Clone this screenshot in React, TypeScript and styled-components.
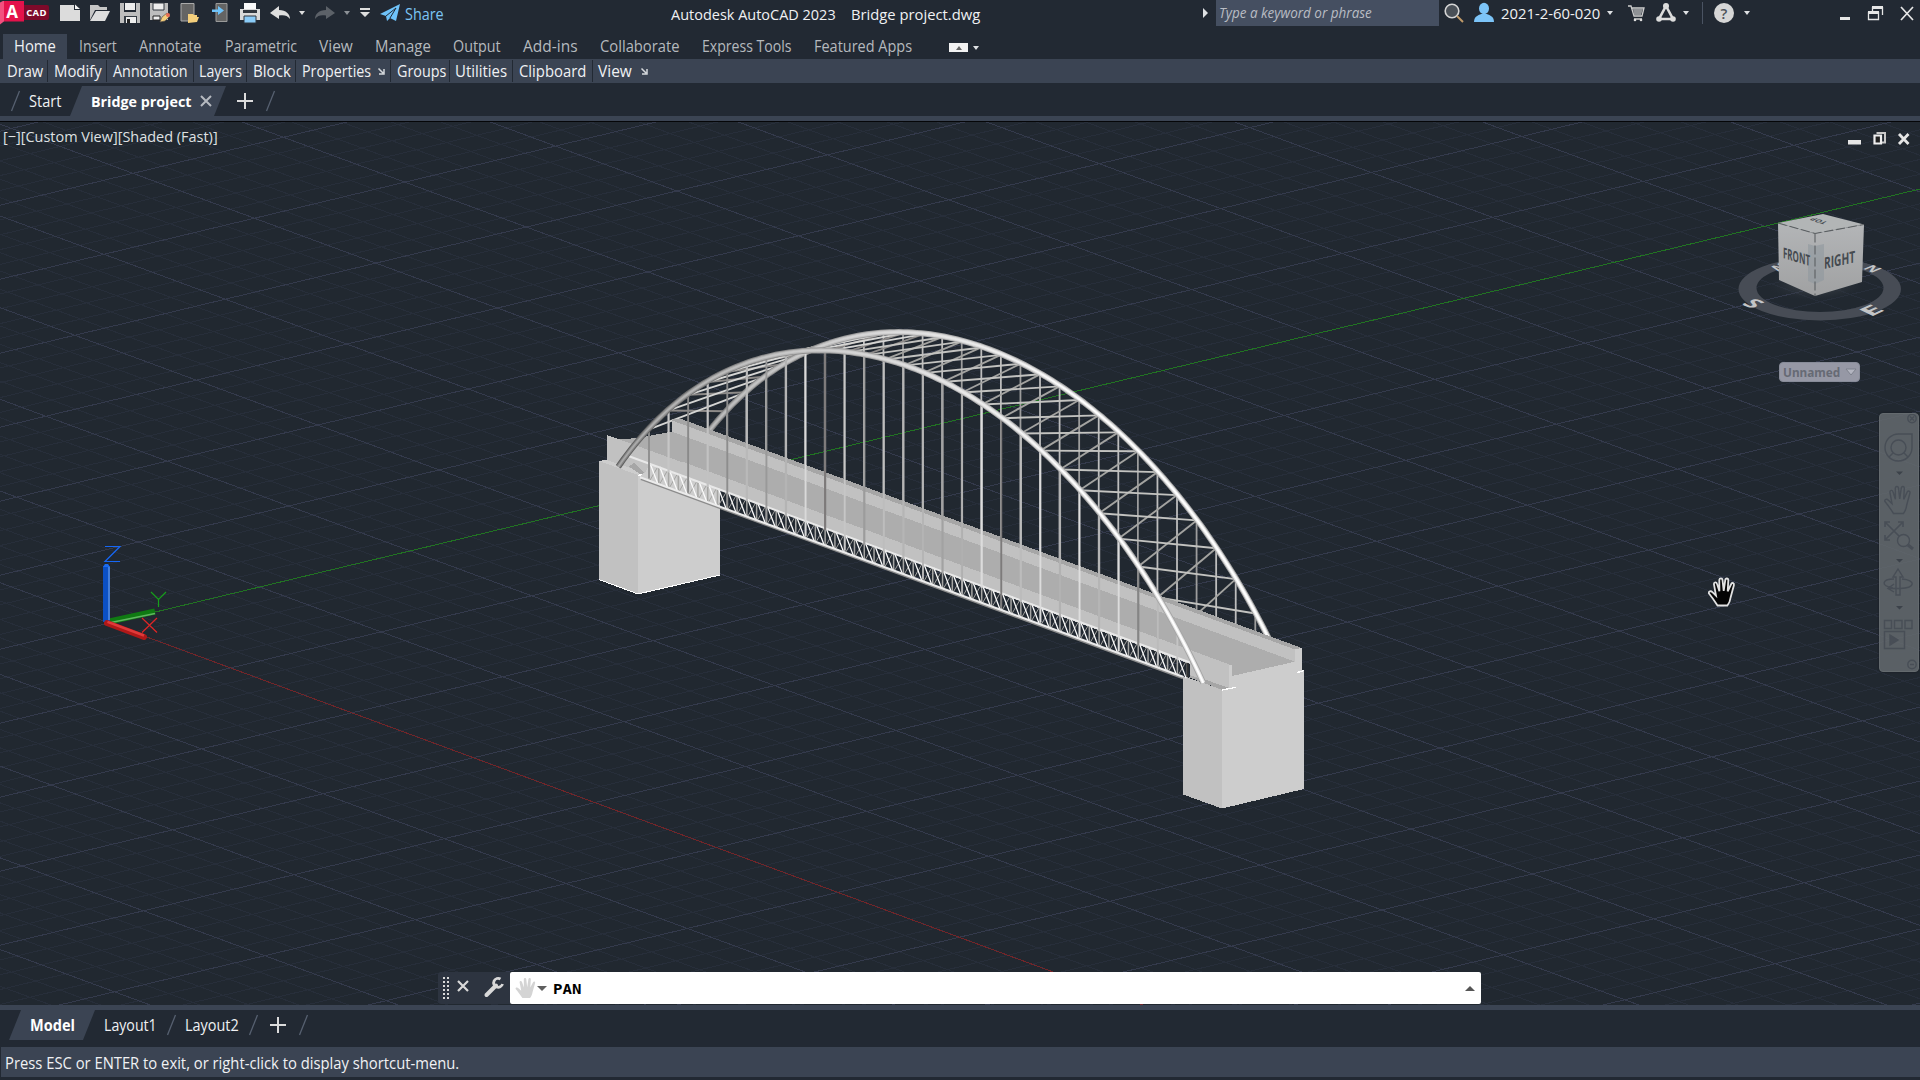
import React, { useLayoutEffect, useRef, useState } from "react";
import styled, { createGlobalStyle } from "styled-components";

const Global = createGlobalStyle`
  * { box-sizing: border-box; }
  html, body { margin: 0; padding: 0; background: #222933; overflow: hidden; }
  body { font-family: "Open Sans", "Noto Sans", sans-serif; }
`;

/* ---------- text fitted to a fixed advance width ---------- */
const FitBox = styled.span<{ $w: number; $size: number; $color: string; $bold?: boolean; $italic?: boolean; $ml: number; $family?: string }>`
  display: block;
  flex: none;
  width: ${(p) => p.$w}px;
  margin-left: ${(p) => p.$ml}px;
  color: ${(p) => p.$color};
  font-size: ${(p) => p.$size}px;
  font-weight: ${(p) => (p.$bold ? 700 : 400)};
  font-style: ${(p) => (p.$italic ? "italic" : "normal")};
  font-family: ${(p) => p.$family || "inherit"};
  white-space: pre;
  line-height: 20px;
`;
const FitInner = styled.span`
  display: inline-block;
  transform-origin: 0 50%;
`;

type FitProps = { text: string; w: number; ml?: number; size?: number; color?: string; bold?: boolean; italic?: boolean; family?: string };
function Fit({ text, w, ml = 0, size = 15.5, color = "#f0f1f3", bold, italic, family }: FitProps) {
  const ref = useRef<HTMLSpanElement>(null);
  const [scale, setScale] = useState(1);
  useLayoutEffect(() => {
    const natural = ref.current ? ref.current.offsetWidth : 0;
    if (natural) setScale((w + 2) / natural);
  }, [w, text]);
  return (
    <FitBox $w={w} $ml={ml} $size={size} $color={color} $bold={bold} $italic={italic} $family={family}>
      <FitInner ref={ref} style={{ transform: `translateX(-1px) scaleX(${scale})` }}>{text}</FitInner>
    </FitBox>
  );
}

/* ---------- frame ---------- */
const Screen = styled.div`
  width: 1920px;
  height: 1080px;
  display: flex;
  flex-direction: column;
  overflow: hidden;
  background: #222933;
`;
const Row = styled.div<{ $h: number; $bg?: string }>`
  display: flex;
  flex: none;
  height: ${(p) => p.$h}px;
  background: ${(p) => p.$bg || "transparent"};
`;
const TitleBar = styled(Row)`
  align-items: flex-start;
  padding-top: 0;
`;
const Slot = styled.div<{ $w: number; $ml?: number; $mt?: number }>`
  flex: none;
  width: ${(p) => p.$w}px;
  margin-left: ${(p) => p.$ml || 0}px;
  margin-top: ${(p) => p.$mt || 0}px;
`;
const Glyph = styled.svg<{ $ml?: number; $mt?: number }>`
  display: block;
  flex: none;
  overflow: visible;
  margin-left: ${(p) => p.$ml || 0}px;
  margin-top: ${(p) => p.$mt || 0}px;
`;
const AppBadge = styled.div`
  display: flex;
  align-items: center;
  flex: none;
  width: 49px;
  height: 25px;
`;
const RedTile = styled.div`
  width: 24px;
  height: 24px;
  line-height: 21px;
  text-align: center;
  color: #fff;
  font-weight: 700;
  font-size: 17px;
  background: linear-gradient(90deg, #f2507f 0 4px, #e4124b 4px);
  clip-path: polygon(0 8%, 16% 0, 100% 0, 100% 88%, 16% 88%, 0 100%);
`;
const CadTile = styled.div`
  width: 25px;
  height: 15px;
  border-radius: 0 2px 2px 0;
  background: #7d0a2a;
  color: #fff;
  font-weight: 700;
  font-size: 9.5px;
  line-height: 15px;
  text-align: center;
  letter-spacing: 0.3px;
`;
const SearchBox = styled.div`
  display: flex;
  flex: none;
  width: 223px;
  height: 26px;
  margin-left: 8px;
  padding: 3px 0 0 3px;
  background: #454f61;
`;
const Divider = styled.div<{ $ml: number; $h: number; $mt: number; $c: string }>`
  flex: none;
  width: 1px;
  height: ${(p) => p.$h}px;
  margin: ${(p) => p.$mt}px 0 0 ${(p) => p.$ml}px;
  background: ${(p) => p.$c};
`;

const RibbonTabs = styled(Row)`
  align-items: stretch;
  padding-left: 3px;
`;
const HomeTab = styled.div`
  width: 64px;
  padding: 2px 0 0 12px;
  background: #3b4453;
`;
const TabText = styled.div`
  padding-top: 2px;
`;
const CollapseButton = styled.div`
  display: flex;
  align-items: center;
  justify-content: center;
  width: 19px;
  height: 9px;
  margin: 9px 0 0 38px;
  background: #f2f2f2;
`;
const PanelCell = styled.div<{ $w: number; $last?: boolean }>`
  display: flex;
  align-items: center;
  flex: none;
  width: ${(p) => p.$w}px;
  height: 22px;
  margin-top: 1px;
  border-right: ${(p) => (p.$last ? "none" : "1px solid #222933")};
`;
const ActiveFileTab = styled.div`
  display: flex;
  flex: none;
  width: 156px;
  height: 30px;
  margin: 3px 0 0 9px;
  padding-top: 5px;
  background: #3b4453;
  clip-path: polygon(12px 0, 156px 0, 144px 100%, 0 100%);
`;
const ModelTab = styled.div`
  flex: none;
  width: 86px;
  height: 30px;
  margin-left: 9px;
  padding-top: 5px;
  background: #3b4453;
  clip-path: polygon(12px 0, 100% 0, 74px 100%, 0 100%);
`;
const Viewport = styled.div`
  position: relative;
  flex: none;
  height: 883px;
  background: #212830;
  overflow: hidden;
`;
const Canvas = styled.svg`
  display: block;
`;
const ViewLabel = styled.div`
  position: absolute;
  left: 4px;
  top: 4px;
`;
const UnnamedTag = styled.div`
  position: absolute;
  left: 1779px;
  top: 240px;
  display: flex;
  width: 81px;
  height: 20px;
  border: 1px solid #888c99;
  border-radius: 4px;
  background: #9698a5;
`;
const NavBar = styled.div`
  position: absolute;
  left: 1879px;
  top: 291px;
  width: 40px;
  height: 259px;
  border: 1px solid #646a6e;
  border-radius: 4px;
  background: rgba(98, 104, 108, 0.88);
  box-shadow: 0 0 2px #14191f;
`;
const CommandLine = styled.div`
  position: absolute;
  left: 438px;
  top: 850px;
  display: flex;
  width: 1043px;
  height: 32px;
`;
const CommandGrip = styled.div`
  display: flex;
  flex: none;
  width: 72px;
  background: #2d3440;
  border-radius: 3px 0 0 3px;
`;
const CommandInput = styled.div`
  display: flex;
  flex: 1;
  min-width: 0;
  background: #fff;
  border-radius: 2px;
`;
const StatusBar = styled(Row)`
  margin: 7px 0 0 1px;
  padding: 6px 0 0 5px;
`;

/* ---------- small icons ---------- */
const Caret = ({ ml, mt = 11, c = "#dfe1e4", w = 6 }: { ml: number; mt?: number; c?: string; w?: number }) => (
  <Glyph $ml={ml} $mt={mt} width={w} height={4}><path d={`M0 0H${w}L${w / 2} 4Z`} fill={c} /></Glyph>
);
const Slash = ({ ml, mt = 0, h = 20 }: { ml: number; mt?: number; h?: number }) => (
  <Glyph $ml={ml} $mt={mt} width={9} height={h}><path d={`M8.5 0L0.5 ${h}`} stroke="#566070" strokeWidth="1.3" /></Glyph>
);
const Plus = ({ ml, mt }: { ml: number; mt: number }) => (
  <Glyph $ml={ml} $mt={mt} width={16} height={16}><path d="M8 0V16M0 8H16" stroke="#dcdcdc" strokeWidth="2" /></Glyph>
);
const Launcher = ({ ml }: { ml: number }) => (
  <Glyph $ml={ml} width={7} height={7}><path d="M0.5 0.5L5 5M6 1V6H1" fill="none" stroke="#d6d9dd" strokeWidth="1.5" /></Glyph>
);
const HAND = "M9.5 28.5C6 23 3.5 19.5 .8 16.2C.4 14.2 2.9 13.6 4.4 15.2L8 18.6L5.9 7C6 4.9 8.4 4.8 9 6.8L11.4 14.2L11.3 3C11.6 .9 14.2 .9 14.5 3L15.7 13.9L17.3 2.8C17.9 .8 20.3 1.2 20.3 3.2L19.7 14.4L23.2 7C24.3 5.2 26.4 6.2 25.9 8.2L22.6 20.5C22.2 23.5 21.4 26 19.4 28.5Z";

function QuickAccess() {
  return (
    <Glyph $ml={11} $mt={0} width={340} height={26} viewBox="60 0 340 26">
      <path d="M60 5H74V10H80V21H60Z" fill="#dcdcdc" /><path d="M75 4.500L80 9H75Z" fill="#f5f5f5" />
      <path d="M90 20V5H98L100 7H107V10H95Z" fill="#c6c6c6" /><path d="M96 11H110L105 21H90Z" fill="#dedede" />
      <path d="M120 3H140V23H120Z" fill="#bdbdbd" /><path d="M124 3H136V12H124Z" fill="#222933" /><path d="M125 3H135V10H125Z" fill="#ededed" /><path d="M124 16H137V23H124Z" fill="#333a42" /><path d="M126 17H136V23H126Z" fill="#eee" /><path d="M127 19H130V23H127Z" fill="#222" />
      <path d="M150 3H168V20H150Z" fill="#bdbdbd" /><path d="M153 3H164V10H153Z" fill="#ededed" stroke="#30363e" /><path d="M153 16H160V20H153Z" fill="#eee" stroke="#222" />
      <path d="M160 22L162 17L167 13L170 16L165 21Z" fill="#f4cf7c" stroke="#5b5148" strokeWidth=".7" /><circle cx="168" cy="15" r="2" fill="#e66a52" />
      <path d="M181 3.500H194V21H181Z" fill="#646464" stroke="#aaa" /><path d="M188 23V14H193L194 15H197V17H199L197 22Z" fill="#f4cf7c" />
      <path d="M216 3.500H227V21.500H216Z" fill="#646464" stroke="#9a9a9a" /><path d="M212 9.500H218V6L224 10.500L218 15V12H212Z" fill="#6fc3fa" />
      <path d="M244 3H256V9H244Z" fill="#fafafa" /><path d="M240 9H260V20H240Z" fill="#d9d9d9" /><path d="M243 10H257V13H243Z" fill="#30363e" /><path d="M244 16H256V23H244Z" fill="#8acbf8" stroke="#30363e" />
      <path d="M270 13L279 6V10C286 10 290 14 290 19C287 15 284 15 279 15.500V19Z" fill="#dedede" />
      <path d="M299 11H305L302 15Z" fill="#dedede" />
      <path d="M335 13L326 6V10C319 10 315 14 315 19C318 15 321 15 326 15.500V19Z" fill="#5c6168" />
      <path d="M344 11H350L347 15Z" fill="#8c9196" />
      <path d="M360 8H370V10H360ZM360 12H370L365 17Z" fill="#dedede" />
      <path d="M380 14L400 4L396 21L390 18L387 21L386 16Z" fill="#6fc3fa" /><path d="M386 16L396 8L390 18" fill="none" stroke="#222933" strokeWidth="1" />
    </Glyph>
  );
}

/* ---------- drawing: grid ---------- */
const RED_SLOPE = 0.3696;
const GREEN_SLOPE = -0.2397;
function Grid() {
  const minor: string[] = [];
  const major: string[] = [];
  for (let k = -75; k < 50; k++) {
    const y = 582.7 + k * 18.34;
    (k % 5 === 0 ? major : minor).push(`M0 ${y.toFixed(1)}L1920 ${(y + 1920 * RED_SLOPE).toFixed(1)}`);
  }
  for (let k = -40; k < 65; k++) {
    const y = 649.2 + k * 14.8;
    (k % 5 === 0 ? major : minor).push(`M0 ${y.toFixed(1)}L1920 ${(y + 1920 * GREEN_SLOPE).toFixed(1)}`);
  }
  return (
    <g fill="none" shapeRendering="crispEdges">
      <path d={minor.join("")} stroke="#272e3a" />
      <path d={major.join("")} stroke="#343a4c" />
      <path d="M107 622.300L1143 1005.200" stroke="#722529" />
      <path d="M107 623.600L1920 189" stroke="#217322" />
    </g>
  );
}

/* ---------- drawing: bridge ---------- */
const X0 = 618.3, X1 = 1203.3, Y0 = 466.7;
const archY = (x: number) => {
  const u = Math.min(1, Math.abs((x - 910.8) / 292.5));
  const h = (Math.sqrt(1.687 - u * u) - 0.8288) / 0.47;
  return Y0 + (x - X0) * RED_SLOPE - 207.5 * h;
};
const BAY = 19.57, DX = 77.9, DY = -18.2;
const nodeX = (i: number) => 649 + BAY * i;
const HANGER = ["#8f8f8f", "#c6c6c6", "#8a8a8a", "#c2c2c2", "#8d8d8d", "#b9b9b9", "#999", "#b4b4b4", "#d9d9d9", "#7d7a7a", "#c6c6c6", "#9c9c9c", "#bdbdbd", "#b5b5b5", "#b4b4b4", "#a2a2a2", "#b0b0b0", "#dcdcdc", "#7d7b7b", "#bcbcbc", "#dcdcdc", "#b2b2b2", "#dedede", "#b5b5b5", "#dcdcdc", "#858585", "#bbb", "#c4c4c4"];

function archPath(dx: number, dy: number) {
  let d = "";
  for (let x = X0; x <= X1 + 0.1; x += 4.5) d += `${d ? "L" : "M"}${(x + dx).toFixed(1)} ${(archY(x) + dy).toFixed(1)}`;
  return d;
}
function Tube({ dx, dy }: { dx: number; dy: number }) {
  const d = archPath(dx, dy);
  return (
    <g fill="none">
      <path d={d} stroke="url(#tubeEdge)" strokeWidth="6" />
      <path d={d} stroke="url(#tubeBody)" strokeWidth="4" />
      <path d={d} stroke="url(#tubeCore)" strokeWidth="1.800" />
    </g>
  );
}
function Bridge() {
  const hangers = Array.from({ length: 28 }, (_, i) => i);
  const chord = (x: number) => 455 + (x - 626.7) * 0.3682;
  const verts: string[] = [];
  const xs: string[] = [];
  const xs2: string[] = [];
  for (let j = 0; j < 56; j++) {
    const a = 649 + j * BAY / 2, b = a + BAY / 2;
    if (a > 1188) break;
    verts.push(`M${a} ${chord(a)}V${chord(a) + 17}`);
    if (b < 1190) {
      xs.push(`M${a + 1} ${chord(a)}L${b - 1} ${chord(b) + 17}`);
      xs2.push(`M${a + 1} ${chord(a) + 17}L${b - 1} ${chord(b)}`);
    }
  }
  return (
    <g>
      <defs>
        <linearGradient id="tubeEdge" gradientUnits="userSpaceOnUse" x1="618" x2="1281" y1="0" y2="0"><stop offset="0" stopColor="#5c5c5c" /><stop offset=".2" stopColor="#858585" /><stop offset=".5" stopColor="#b0b0b0" /><stop offset="1" stopColor="#a0a0a0" /></linearGradient>
        <linearGradient id="tubeBody" gradientUnits="userSpaceOnUse" x1="618" x2="1281" y1="0" y2="0"><stop offset="0" stopColor="#848484" /><stop offset=".2" stopColor="#b0b0b0" /><stop offset=".5" stopColor="#dadada" /><stop offset="1" stopColor="#e9e9e9" /></linearGradient>
        <linearGradient id="tubeCore" gradientUnits="userSpaceOnUse" x1="618" x2="1281" y1="0" y2="0"><stop offset="0" stopColor="#a6a6a6" /><stop offset=".2" stopColor="#c2c2c2" /><stop offset=".5" stopColor="#e6e6e6" /><stop offset=".7" stopColor="#fff" /></linearGradient>
      </defs>
      {/* far arch and its hangers */}
      <g strokeWidth="1.800">
        {hangers.map((i) => {
          const x = nodeX(i) + DX;
          return <path key={i} d={`M${x} ${archY(nodeX(i)) + DY}V${419 + (x - 680) * RED_SLOPE + 4}`} stroke={i % 3 === 0 ? "#9d9d9d" : "#bdbdbd"} />;
        })}
      </g>
      <g strokeWidth="1.900">
        {hangers.slice(1).map((i) => (
          <path key={i} d={`M${nodeX(i)} ${archY(nodeX(i)) + 1}L${nodeX(i - 1) + DX} ${archY(nodeX(i - 1)) + DY + 1}`} stroke={i < 12 ? "#8d8a88" : "#a3a3a0"} />
        ))}
        {hangers.slice(0, 27).map((i) => (
          <path key={i} d={`M${nodeX(i)} ${archY(nodeX(i)) + 1}L${nodeX(i + 1) + DX} ${archY(nodeX(i + 1)) + DY + 1}`} stroke={i < 10 ? "#d6d6d4" : "#c3c3c0"} />
        ))}
      </g>
      <Tube dx={DX} dy={DY} />
      <g shapeRendering="crispEdges">
        {/* piers */}
        <path d="M599 461L604 460L650 463L720 489V575L638 594L599 579.500Z" fill="#cdcdcd" />
        <path d="M599 461L638 475V594L599 579.500Z" fill="#c1c1c1" />
        <path d="M599 579.500L638 594L720 575" fill="none" stroke="#fff" />
        <path d="M1183 676L1222 689.500L1304 670.500V789L1222 808.500L1183 794.500Z" fill="#cdcdcd" />
        <path d="M1183 676L1222 689.500V808.500L1183 794.500Z" fill="#c1c1c1" />
        {/* roadway */}
        <path d="M641 437.500L672 431.500V419L680 418.500L1301.700 648L1295 661.700L1232 676L1222 690L1190 677V663L640 460L615 440Z" fill="#adadad" />
        <path d="M672 420.500L1295 649.500V661.700L672 431.700Z" fill="#c1c1c1" />
        <path d="M672 420.500L680 418.500L1301.700 648L1295 649.500Z" fill="#a6a6a6" />
        <path d="M607 435L628 442.500L636 444.500L1229.300 664.500V688.500L1190 675V664L650 464L645 473L607 460Z" fill="#c1c1c1" />
        <path d="M628 442.500L641 438L720 467.500L680 461.500Z" fill="#adadad" />
        <path d="M629 466.500L634 463L645 473L640 474Z" fill="#a6a6a6" />
        <path d="M1188 677L1205 679.500L1229 688L1222 689.800Z" fill="#a6a6a6" />
        <path d="M1229.300 665.500L1232 664.500V676L1295 661.700V649.500L1301.700 648V671L1304 670.500V674L1229 690Z" fill="#cdcdcd" />
        <path d="M1222 690L1236 687.300M1297 672.500L1304 670.700M638 475.500L642 474.500" stroke="#fff" strokeWidth="1.300" />
      </g>
      {/* lattice truss */}
      <path d={verts.join("")} stroke="#a6a6a4" strokeWidth="1.500" />
      <path d={xs2.join("")} stroke="#a3a3a1" strokeWidth="1" />
      <path d={xs.join("")} stroke="#fbfbfb" strokeWidth="1.300" />
      <path d="M1187.500 663V677" stroke="#333" strokeWidth="2" />
      <path d="M627 455.500L1190 662.500" stroke="#e8e8e8" strokeWidth="2" />
      <path d="M641 478.800L1183 678.200" stroke="#8c8c8c" strokeWidth="2.400" />
      <path d="M640 477.300L1183 676.700" stroke="#ebebeb" strokeWidth="2" />
      {/* near hangers */}
      {hangers.map((i) => {
        const x = nodeX(i);
        return <path key={i} d={`M${x} ${archY(x)}V${chord(x) + (i % 2 ? 2 : 15)}`} stroke={HANGER[i]} strokeWidth={i % 2 && i < 26 ? 2.2 : 1.9} />;
      })}
      <Tube dx={0} dy={0} />
    </g>
  );
}

function Ucs() {
  return (
    <g>
      <path d="M107 622L155 611.500" stroke="#0f7a12" strokeWidth="6" /><path d="M111 622.500L155 613.500" stroke="#5fb660" strokeWidth="1.500" />
      <path d="M106.500 566V622" stroke="#0b50c4" strokeWidth="7" /><path d="M109 567V620" stroke="#5a8fe0" strokeWidth="1.500" /><path d="M103 567L105 564H108L110 567Z" fill="#1c6cf0" />
      <path d="M107 623L144 637" stroke="#b01818" strokeWidth="6" strokeLinecap="round" /><path d="M107.500 621.800L144 635.500" stroke="#e03a3a" strokeWidth="2.500" />
      <g fill="none" strokeWidth="1.200">
        <path d="M105 546.500H120L105 561.500H120" stroke="#1667f5" />
        <path d="M151 592L158.500 599.500L166 592M158.500 599.500V607" stroke="#17a01a" />
        <path d="M142 618L157 632.500M157 618L142 632.500" stroke="#e02626" />
      </g>
    </g>
  );
}

function ViewCube() {
  return (
    <g fontFamily="Open Sans, sans-serif" fontWeight="700">
      <defs>
        <radialGradient id="cubeShadow"><stop offset="0" stopColor="#555a60" stopOpacity=".8" /><stop offset="1" stopColor="#212830" stopOpacity="0" /></radialGradient>
        <linearGradient id="cubeL" x1="0" x2="0" y1="0" y2="1"><stop offset="0" stopColor="#b3b5b7" /><stop offset="1" stopColor="#a0a1a2" /></linearGradient>
      </defs>
      <path fillRule="evenodd" fill="#474c55" d="M1738.500 289A81.200 31.500 0 1 1 1901 289A81.200 31.500 0 1 1 1738.500 289ZM1756.500 288A63.500 24 0 1 0 1883.500 288A63.500 24 0 1 0 1756.500 288Z" />
      <ellipse cx="1816" cy="285" rx="52" ry="17" fill="url(#cubeShadow)" />
      <g fill="#c3c5c7" fontSize="18">
        <text transform="matrix(1.15 .5 -1.05 .48 1741 304)">S</text>
        <text transform="matrix(1.5 -.68 1.05 .5 1870.500 317)">E</text>
        <text transform="matrix(-.85 -.35 .85 -.35 1883 269)" fontSize="16">N</text>
        <text transform="matrix(-.85 .35 -.85 -.35 1782 262)" fontSize="16">W</text>
      </g>
      <path d="M1778 223L1823 214L1864 224.500L1815 233.500Z" fill="#b2b5b6" />
      <path d="M1778 223L1815 233.500V296L1779 280Z" fill="url(#cubeL)" />
      <path d="M1815 233.500L1864 224.500L1862 282L1815 296Z" fill="url(#cubeL)" />
      <path d="M1808 244L1815 246L1824 244V280L1815 284L1808 281Z" fill="#8f979f" opacity=".6" />
      <path d="M1778 223L1815 233.500L1864 224.500M1815 233.500V296" fill="none" stroke="#5c6063" strokeWidth="1.100" strokeDasharray="9 3" />
      <g fill="#454a50">
        <text transform="matrix(1 .3 0 1 1783 258)" fontSize="15" textLength="27" lengthAdjust="spacingAndGlyphs">FRONT</text>
        <text transform="matrix(1 -.22 0 1 1824 269)" fontSize="16" textLength="31" lengthAdjust="spacingAndGlyphs">RIGHT</text>
        <text transform="matrix(-.55 -.18 .5 -.25 1828 222)" fontSize="13">TOP</text>
      </g>
    </g>
  );
}

function NavIcons() {
  return (
    <Canvas width={38} height={257} viewBox="1880 414 38 257">
      <g fill="none" stroke="#454b54" strokeWidth="1.400" opacity=".85">
        <circle cx="1912" cy="418.500" r="4.200" /><path d="M1910 416.500L1914 420.500M1914 416.500L1910 420.500" />
        <path d="M1899 434H1912V448A13.500 13.500 0 1 1 1899 434Z" /><circle cx="1898.500" cy="447.500" r="7.500" /><path d="M1893 453L1889 457M1904 453L1908 457" />
        <path d={HAND} transform="translate(1884 485)" />
        <path d="M1885 522L1903 540M1903 522L1885 540M1885 527V522H1890M1898 522H1903V527M1885 535V540H1890" strokeWidth="1.600" /><circle cx="1903.500" cy="540.500" r="6" fill="#5d6368" /><path d="M1908 545L1913 549" strokeWidth="3" />
        <path d="M1896 595V577H1893L1898 569L1903 577H1900V595Z" /><path d="M1893 588C1880 586 1882 579 1894 579M1902 579C1916 580 1916 588 1900 588.500H1889M1894 584L1888 588.500L1894 592" />
        <path d="M1884.500 620.500H1891.500V628.500H1884.500ZM1894.500 620.500H1902V628.500H1894.500ZM1905 620.500H1912V628.500H1905ZM1884.500 631.500H1904.500V648.500H1884.500Z" /><path d="M1890 635L1898 640L1890 645Z" fill="#454b54" />
        <circle cx="1912" cy="664.500" r="4.200" /><path d="M1910 664.500H1914" />
      </g>
      <path d="M1896 471.500H1903L1899.500 475ZM1896 559H1903L1899.500 562.500ZM1896 606H1903L1899.500 609.500Z" fill="#3c424a" />
    </Canvas>
  );
}

const ribbon: [string, number, number][] = [
  ["Insert", 13, 36], ["Annotate", 24, 61], ["Parametric", 25, 70], ["View", 24, 32], ["Manage", 24, 54], ["Output", 24, 46],
  ["Add-ins", 24, 53], ["Collaborate", 24, 78], ["Express Tools", 24, 88], ["Featured Apps", 24, 96],
];
const panels: { t: string; cell: number; ml: number; w: number; launch?: number; last?: boolean }[] = [
  { t: "Draw", cell: 48, ml: 8, w: 34 }, { t: "Modify", cell: 59, ml: 7, w: 46 }, { t: "Annotation", cell: 87, ml: 7, w: 73 },
  { t: "Layers", cell: 53, ml: 6, w: 41 }, { t: "Block", cell: 49, ml: 7, w: 36 }, { t: "Properties", cell: 95, ml: 7, w: 67, launch: 8 },
  { t: "Groups", cell: 59, ml: 7, w: 47 }, { t: "Utilities", cell: 63, ml: 6, w: 50 }, { t: "Clipboard", cell: 80, ml: 7, w: 65 },
  { t: "View", cell: 60, ml: 6, w: 32, launch: 10, last: true },
];

export default function App() {
  return (
    <Screen>
      <Global />
      <TitleBar $h={34}>
        <AppBadge><RedTile>A</RedTile><CadTile>CAD</CadTile></AppBadge>
        <QuickAccess />
        <Slot $w={37} $ml={6} $mt={4}><Fit text="Share" w={37} color="#7cc4f5" /></Slot>
        <Slot $w={163} $ml={229} $mt={4}><Fit text="Autodesk AutoCAD 2023" w={163} size={15} /></Slot>
        <Slot $w={127} $ml={17} $mt={4}><Fit text="Bridge project.dwg" w={127} size={15} /></Slot>
        <Glyph $ml={224} $mt={8} width={5} height={10}><path d="M0 0L5 5L0 10Z" fill="#dfe1e4" /></Glyph>
        <SearchBox><Fit text="Type a keyword or phrase" ml={1} w={151} size={14} italic color="#b9bdc4" /></SearchBox>
        <Glyph $ml={5} $mt={3} width={20} height={20}><circle cx="8" cy="8" r="6.800" fill="#4a5057" stroke="#d5d5d5" strokeWidth="1.600" /><path d="M13 13L19 19" stroke="#c09a6a" strokeWidth="2" /></Glyph>
        <Glyph $ml={10} $mt={3} width={20} height={19}><ellipse cx="10" cy="5.500" rx="5" ry="5.800" fill="#7cc4f8" /><path d="M0 19C0 13 5 12 7 11H13C15 12 20 13 20 19Z" fill="#7cc4f8" /></Glyph>
        <Slot $w={98} $ml={8} $mt={3}><Fit text="2021-2-60-020" w={97} size={15} /></Slot>
        <Caret ml={7} />
        <Glyph $ml={15} $mt={5} width={16} height={17}><path d="M0 1H3L6 11H14L16 3H4M6 14H14" fill="none" stroke="#cfcfcf" strokeWidth="1.300" /><path d="M5 4H15L13 10H6Z" fill="#8f9296" /><circle cx="7" cy="15" r="1.300" fill="#ddd" /><circle cx="13" cy="15" r="1.300" fill="#ddd" /></Glyph>
        <Glyph $ml={12} $mt={3} width={20} height={19}><path d="M10 3L17 16H3Z" fill="none" stroke="#dcdcdc" strokeWidth="2.600" /><circle cx="10" cy="3" r="3" fill="#dcdcdc" /><circle cx="3" cy="16" r="2.800" fill="#dcdcdc" /><circle cx="17" cy="16" r="2.800" fill="#dcdcdc" /></Glyph>
        <Caret ml={7} />
        <Divider $ml={13} $mt={2} $h={22} $c="#4a5362" />
        <Glyph $ml={11} $mt={3} width={20} height={20}><circle cx="10" cy="10" r="10" fill="#d6d6d6" /><text x="10" y="15.500" textAnchor="middle" fontSize="15" fontWeight="600" fill="#4c5259">?</text></Glyph>
        <Caret ml={10} />
        <Glyph $ml={90} $mt={6} width={75} height={16}>
          <path d="M0 11H10V14H0Z" fill="#e6e6e6" />
          <path d="M32.500 1H43M42.500 1V9M32.500 1V5M28.500 6.500H38.500V13.500H28.500Z" fill="none" stroke="#e6e6e6" strokeWidth="1.300" /><path d="M32 0H43V3H32ZM28 5H39V8H28Z" fill="#e6e6e6" />
          <path d="M61 1L73 14M73 1L61 14" stroke="#e6e6e6" strokeWidth="1.700" />
        </Glyph>
      </TitleBar>

      <RibbonTabs $h={25}>
        <HomeTab><Fit text="Home" w={40} /></HomeTab>
        {ribbon.map(([t, ml, w]) => <TabText key={t}><Fit text={t} ml={ml} w={w} color="#b5b9be" /></TabText>)}
        <CollapseButton><Glyph width={6} height={4}><path d="M0 4H6L3 0Z" fill="#666" /></Glyph></CollapseButton>
        <Caret ml={5} mt={12} />
      </RibbonTabs>

      <Row $h={24} $bg="#3b4453">
        {panels.map((p) => (
          <PanelCell key={p.t} $w={p.cell} $last={p.last}>
            <Fit text={p.t} ml={p.ml} w={p.w} />
            {p.launch && <Launcher ml={p.launch} />}
          </PanelCell>
        ))}
      </Row>

      <Row $h={33}>
        <Slash ml={11} mt={8} />
        <Slot $w={31} $ml={10} $mt={8}><Fit text="Start" w={31} /></Slot>
        <ActiveFileTab>
          <Fit text="Bridge project" ml={22} w={98} bold size={15} color="#fff" />
          <Glyph $ml={11} $mt={5} width={10} height={10}><path d="M0 0L10 10M10 0L0 10" stroke="#b6bac0" strokeWidth="2" /></Glyph>
        </ActiveFileTab>
        <Plus ml={11} mt={10} />
        <Slash ml={13} mt={8} />
      </Row>
      <Row $h={5} $bg="#3b4453" />
      <Row $h={1} $bg="#050608" />

      <Viewport>
        <Canvas width={1920} height={883} viewBox="0 122 1920 883">
          <Grid />
          <Bridge />
          <Ucs />
          <ViewCube />
          <g>
            <path d="M1848 140H1861V144.500H1848Z" fill="#e6e6e6" />
            <path d="M1876.500 133H1885V142.500H1882" fill="none" stroke="#c9c9c9" strokeWidth="2" /><path d="M1874.500 135.500H1881V143.500H1874.500Z" fill="#222" stroke="#eee" strokeWidth="2.200" />
            <path d="M1899 134L1908.500 144M1908.500 134L1899 144" stroke="#e6e6e6" strokeWidth="2.800" />
          </g>
          <path d={HAND} transform="translate(1708 577)" fill="#050505" stroke="#e2e2e2" strokeWidth="1.800" />
        </Canvas>
        <ViewLabel><Fit text="[−][Custom View][Shaded (Fast)]" w={213} size={15} color="#dfe1e3" /></ViewLabel>
        <UnnamedTag>
          <Fit text="Unnamed" ml={4} w={55} size={12} color="#666a74" bold family="'Noto Sans', sans-serif" />
          <Glyph $ml={7} $mt={6} width={10} height={6}><path d="M0 0H10L5 6Z" fill="#b3b5c0" stroke="#7d818c" /></Glyph>
        </UnnamedTag>
        <NavBar><NavIcons /></NavBar>
        <CommandLine>
          <CommandGrip>
            <Glyph $ml={5} $mt={5} width={6} height={22}><path d="M1 0V22M5 0V22" stroke="#d9d9d9" strokeWidth="2" strokeDasharray="2 2" /></Glyph>
            <Glyph $ml={9} $mt={9} width={10} height={10}><path d="M0 0L10 10M10 0L0 10" stroke="#d9d9d9" strokeWidth="2.200" /></Glyph>
            <Glyph $ml={17} $mt={5} width={20} height={20}><path d="M1.500 18L11 8.500" stroke="#d9d9d9" strokeWidth="4" strokeLinecap="round" /><path d="M15.500 1.500A4.500 4.500 0 1 0 17.500 6.500" fill="none" stroke="#d9d9d9" strokeWidth="2.800" transform="translate(0 .500)" /></Glyph>
          </CommandGrip>
          <CommandInput>
            <Glyph $ml={5} $mt={5} width={21} height={22} viewBox="0 0 27 30" preserveAspectRatio="none"><path d={HAND} fill="#d4d4d4" /></Glyph>
            <Glyph $ml={1} $mt={14} width={10} height={5}><path d="M0 0H10L5 5Z" fill="#5f5f5f" /></Glyph>
            <Slot $w={27} $ml={7} $mt={7}><Fit text="PAN" w={26} size={14} bold color="#000" family="'DejaVu Sans Mono', monospace" /></Slot>
            <Glyph $ml={884} $mt={14} width={10} height={5}><path d="M0 5H10L5 0Z" fill="#555" /></Glyph>
          </CommandInput>
        </CommandLine>
      </Viewport>

      <Row $h={5} $bg="#3b4453" />
      <Row $h={30}>
        <ModelTab><Fit text="Model" ml={22} w={43} bold color="#fff" /></ModelTab>
        <Slot $w={51} $ml={10} $mt={5}><Fit text="Layout1" w={51} /></Slot>
        <Slash ml={11} mt={5} />
        <Slot $w={52} $ml={10} $mt={5}><Fit text="Layout2" w={52} /></Slot>
        <Slash ml={11} mt={5} />
        <Plus ml={12} mt={7} />
        <Slash ml={13} mt={5} />
      </Row>
      <StatusBar $h={30} $bg="#3b4453">
        <Fit text="Press ESC or ENTER to exit, or right-click to display shortcut-menu." w={452} />
      </StatusBar>
    </Screen>
  );
}
